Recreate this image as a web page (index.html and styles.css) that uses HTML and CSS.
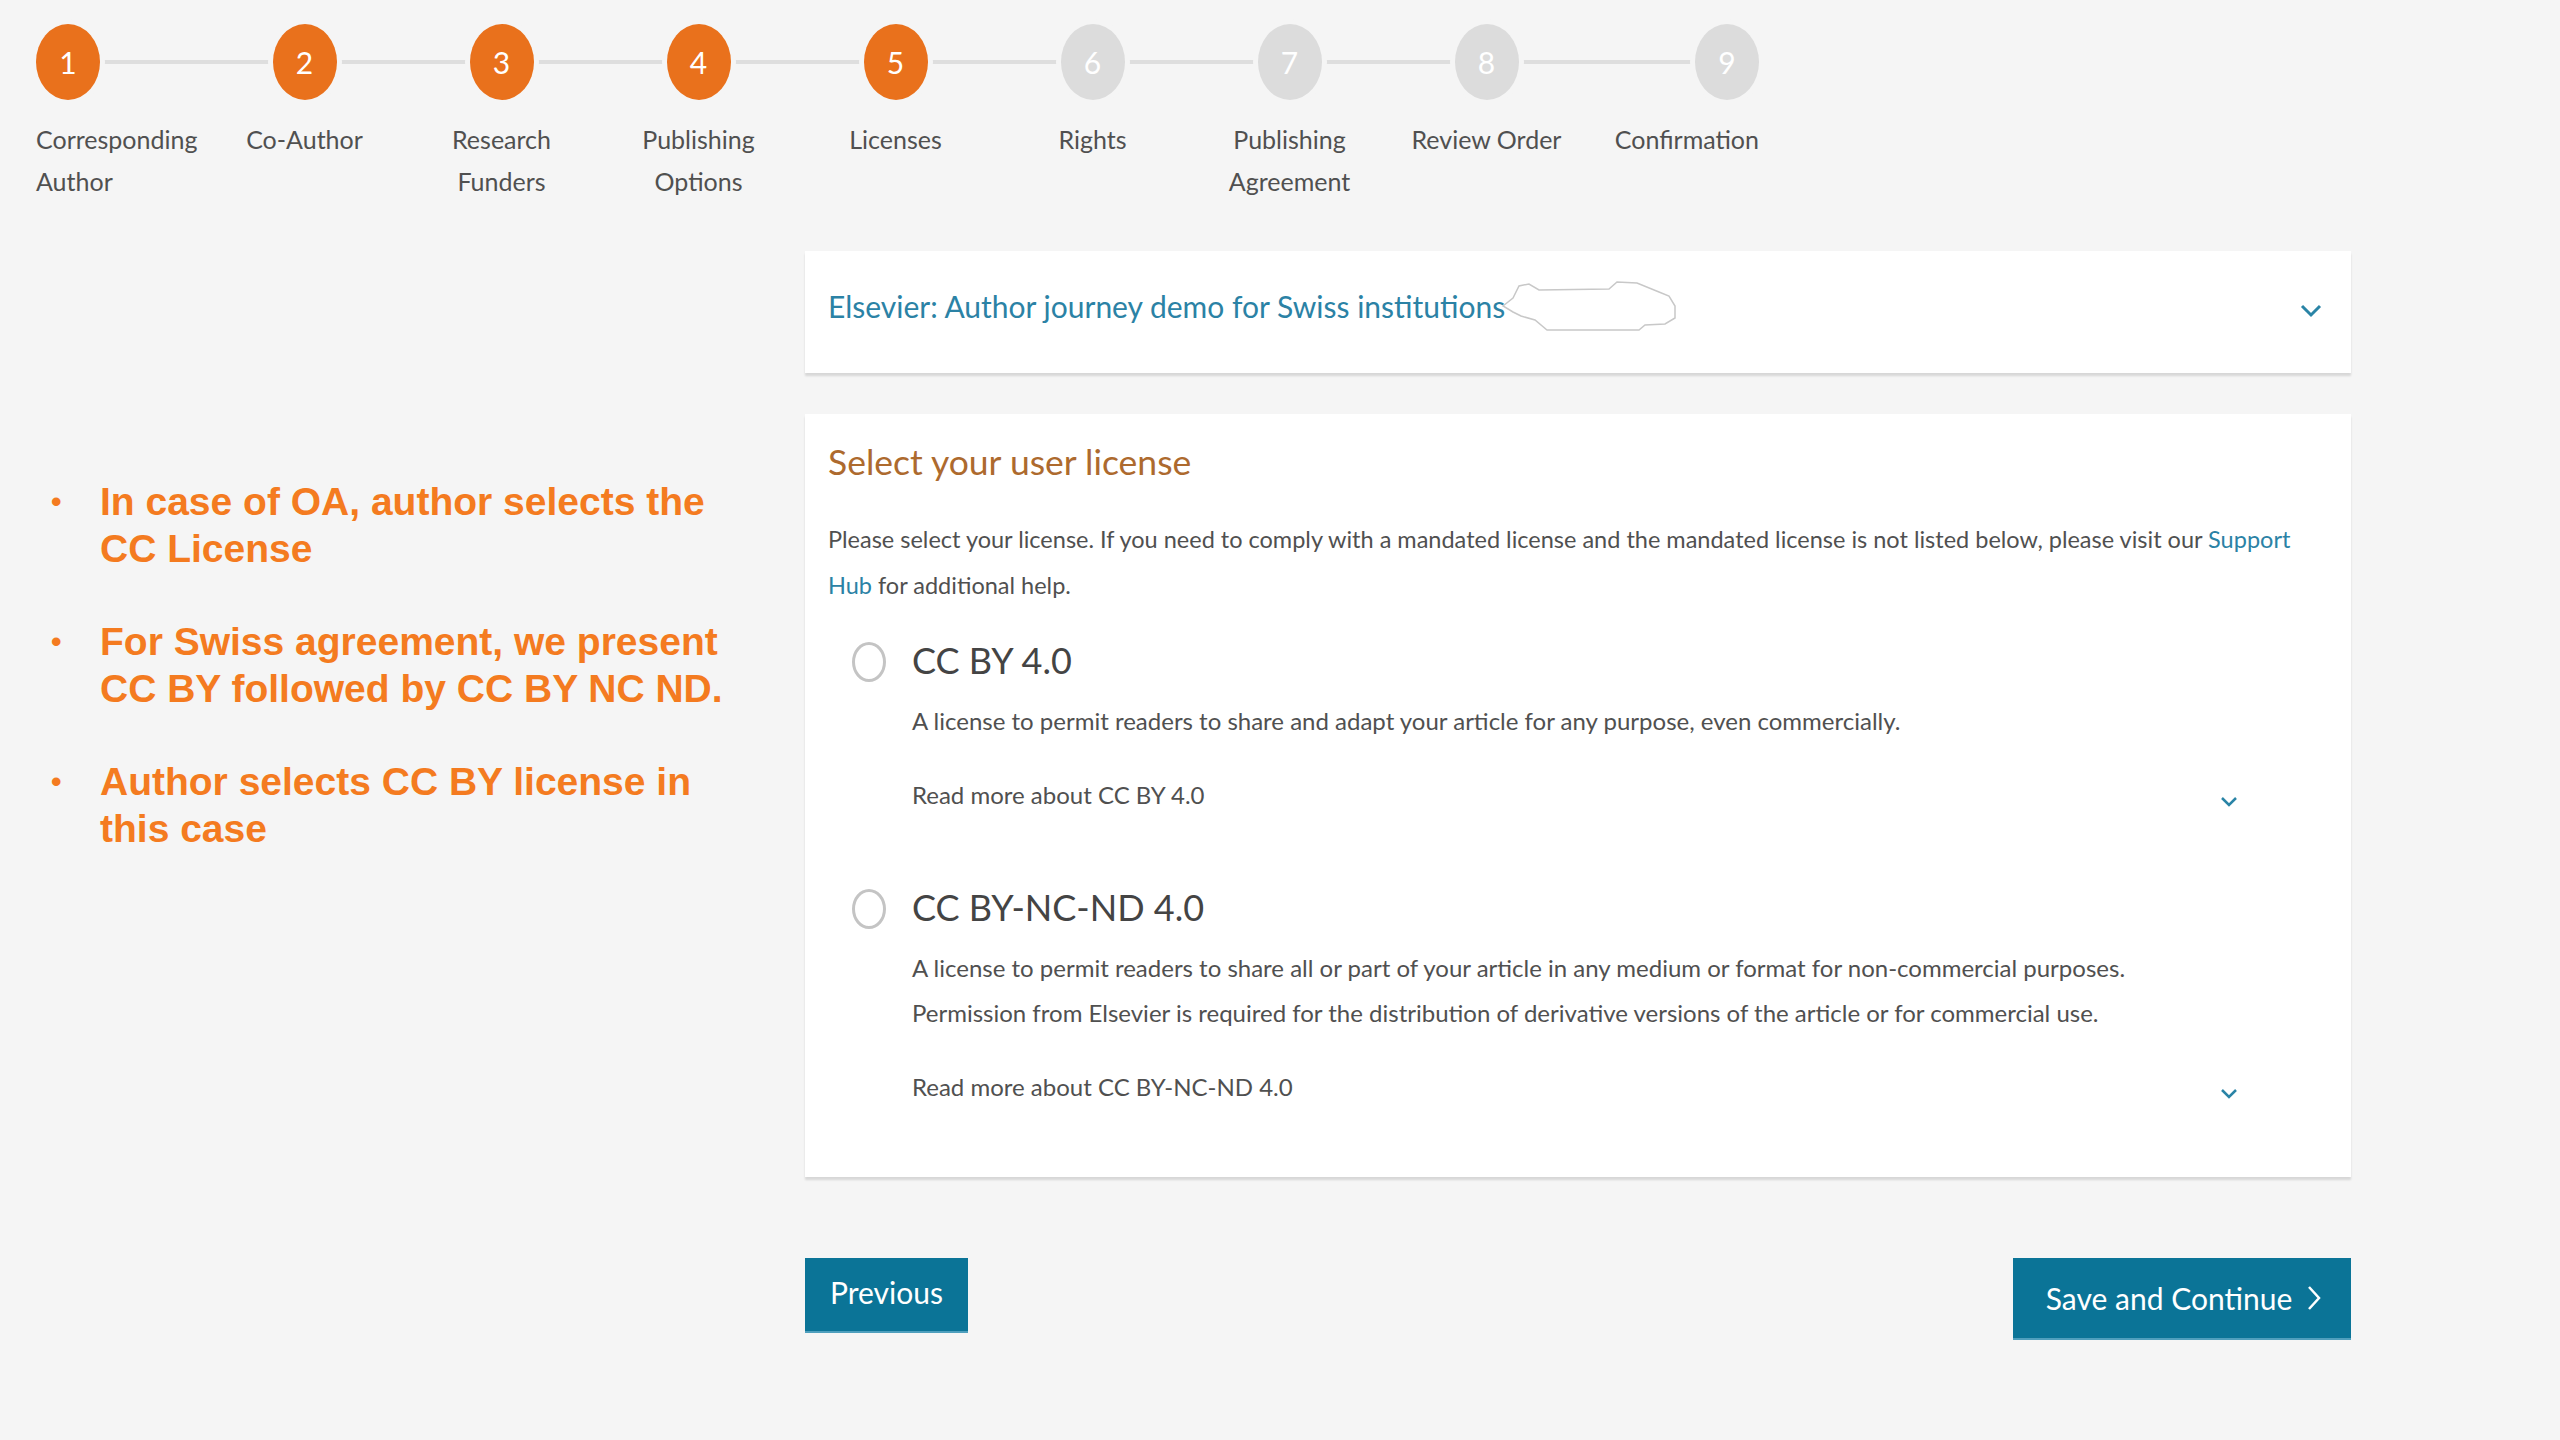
FILE: index.html
```html
<!DOCTYPE html>
<html lang="en">
<head>
    <meta charset="UTF-8">
    <meta name="viewport" content="width=device-width, initial-scale=1.0">
    <title>Licenses</title>
    <link rel="stylesheet" href="styles.css">
</head>
<body>
    <ol class="stepper">
        <li class="step done first"><span class="dot">1</span><span class="label">Corresponding<br>Author</span></li>
        <li class="step done"><span class="dot">2</span><span class="label">Co-Author</span></li>
        <li class="step done"><span class="dot">3</span><span class="label">Research<br>Funders</span></li>
        <li class="step done"><span class="dot">4</span><span class="label">Publishing<br>Options</span></li>
        <li class="step done"><span class="dot">5</span><span class="label">Licenses</span></li>
        <li class="step"><span class="dot">6</span><span class="label">Rights</span></li>
        <li class="step"><span class="dot">7</span><span class="label">Publishing<br>Agreement</span></li>
        <li class="step"><span class="dot">8</span><span class="label">Review Order</span></li>
        <li class="step last"><span class="dot">9</span><span class="label">Confirmation</span></li>
    </ol>

    <div class="layout">
        <ul class="notes">
            <li>In case of OA, author selects the CC License</li>
            <li>For Swiss agreement, we present CC BY followed by CC BY NC ND.</li>
            <li>Author selects CC BY license in this case</li>
        </ul>

        <div class="main">
            <div class="card journal">
                <span class="journal-title">Elsevier: Author journey demo for Swiss institutions</span>
                <svg class="blob" width="180" height="56" viewBox="0 0 180 56">
                    <path d="M4 28 L14 20 L20 8 L30 6 L40 12 L110 11 L118 4 L138 5 L160 14 L170 18 L176 28 L176 40 L166 46 L146 47 L140 52 L48 52 L36 42 L22 38 L14 34 Z" fill="#fff" stroke="#c8c8c8" stroke-width="1.5"/>
                </svg>
                <svg class="chev" width="24" height="16" viewBox="0 0 24 16"><path d="M3 3 L12 12 L21 3" fill="none" stroke="#2a84a6" stroke-width="3"/></svg>
            </div>

            <div class="card licenses">
                <h2>Select your user license</h2>
                <p class="intro">Please select your license. If you need to comply with a mandated license and the mandated license is not listed below, please visit our <a href="#">Support Hub</a> for additional help.</p>

                <div class="option">
                    <span class="radio"></span>
                    <div class="option-body">
                        <div class="option-name">CC BY 4.0</div>
                        <p class="option-desc">A license to permit readers to share and adapt your article for any purpose, even commercially.</p>
                        <div class="read-more">
                            <span>Read more about CC BY 4.0</span>
                            <svg class="chev small" width="20" height="14" viewBox="0 0 20 14"><path d="M3 3 L10 10 L17 3" fill="none" stroke="#2a84a6" stroke-width="2.5"/></svg>
                        </div>
                    </div>
                </div>

                <div class="option">
                    <span class="radio"></span>
                    <div class="option-body">
                        <div class="option-name">CC BY-NC-ND 4.0</div>
                        <p class="option-desc">A license to permit readers to share all or part of your article in any medium or format for non-commercial purposes.<br>Permission from Elsevier is required for the distribution of derivative versions of the article or for commercial use.</p>
                        <div class="read-more">
                            <span>Read more about CC BY-NC-ND 4.0</span>
                            <svg class="chev small" width="20" height="14" viewBox="0 0 20 14"><path d="M3 3 L10 10 L17 3" fill="none" stroke="#2a84a6" stroke-width="2.5"/></svg>
                        </div>
                    </div>
                </div>
            </div>

            <div class="actions">
                <button class="btn prev">Previous</button>
                <button class="btn next">Save and Continue
                    <svg class="arrow" width="16" height="28" viewBox="0 0 16 28"><path d="M3 3 L13 14 L3 25" fill="none" stroke="#fff" stroke-width="2.5"/></svg>
                </button>
            </div>
        </div>
    </div>
</body>
</html>
```

FILE: styles.css
```css
body {
    margin: 0;
    background-color: #f5f5f5;
    font-family: Lato, "Open Sans", sans-serif;
    color: #505050;
    width: 2560px;
    height: 1440px;
    overflow: hidden;
}

/* stepper */
.stepper {
    position: relative;
    display: flex;
    list-style: none;
    margin: 0;
    padding: 24px 0 0 36px;
}
.stepper::before {
    content: "";
    position: absolute;
    left: 69px;
    top: 60px;
    width: 1657px;
    height: 4px;
    background-color: #dedede;
}
.step {
    position: relative;
    width: 197px;
    display: flex;
    flex-direction: column;
    align-items: center;
    text-align: center;
}
.step.first {
    width: 170px;
    align-items: flex-start;
    text-align: left;
}
.step.last {
    width: 174px;
    align-items: flex-end;
    text-align: center;
}
.dot {
    width: 64px;
    height: 76px;
    border-radius: 50%;
    background-color: #dcdcdc;
    color: #fff;
    font-size: 30px;
    display: flex;
    align-items: center;
    justify-content: center;
    box-shadow: 0 0 0 5px #f5f5f5;
}
.step.done .dot {
    background-color: #e9711c;
}
.label {
    margin-top: 18px;
    font-size: 25px;
    line-height: 42px;
    color: #505050;
}

/* layout */
.layout {
    display: grid;
    grid-template-columns: 805px 1546px;
    margin-top: 49px;
}

.notes {
    list-style: none;
    margin: 227px 0 0;
    padding: 0 55px 0 51px;
    font-family: "Liberation Sans", Arial, sans-serif;
    font-weight: bold;
    font-size: 39px;
    line-height: 47px;
    color: #f47b20;
}
.notes li {
    display: grid;
    grid-template-columns: 49px 1fr;
    margin-bottom: 46px;
}
.notes li::before {
    content: "\2022";
    font-size: 30px;
}

.card {
    background-color: #fff;
    box-shadow: 0 3px 2px rgba(0, 0, 0, 0.12);
}
.journal {
    position: relative;
    height: 122px;
    display: flex;
    align-items: flex-start;
    padding: 30px 28px 0 23px;
    box-sizing: border-box;
}
.journal-title {
    font-size: 30px;
    color: #2b82a5;
    line-height: 50px;
}
.blob {
    margin-left: -6px;
    margin-top: -3px;
}
.journal .chev {
    margin-left: auto;
    margin-top: 22px;
}

.licenses {
    margin-top: 41px;
    padding: 20px 40px 44px 23px;
    min-height: 763px;
    box-sizing: border-box;
}
.licenses h2 {
    margin: 0;
    font-weight: normal;
    font-size: 35.5px;
    line-height: 56px;
    color: #ad6a2e;
}
.intro {
    margin: 26px 0 0;
    font-size: 23.5px;
    line-height: 46px;
}
.intro a {
    color: #2b82a5;
    text-decoration: none;
}

.option {
    display: flex;
    align-items: flex-start;
    margin-top: 24px;
}
.option + .option {
    margin-top: 64px;
}
.radio {
    width: 28px;
    height: 34px;
    border: 3px solid #c4c4c4;
    border-radius: 50%;
    margin: 10px 0 0 24px;
    flex-shrink: 0;
}
.option-body {
    flex: 1;
    margin-left: 26px;
}
.option-name {
    font-size: 36px;
    line-height: 56px;
    color: #444;
}
.option-desc {
    margin: 10px 0 0;
    font-size: 24px;
    line-height: 45px;
}
.read-more {
    display: flex;
    align-items: center;
    margin-top: 32px;
    font-size: 24px;
    line-height: 40px;
}
.read-more .chev {
    margin-left: auto;
    margin-right: 72px;
    margin-top: 14px;
}

/* buttons */
.actions {
    display: flex;
    justify-content: space-between;
    align-items: flex-start;
    margin-top: 81px;
}
.btn {
    font-family: Lato, "Open Sans", sans-serif;
    background-color: #0b7497;
    color: #fff;
    border: none;
    border-bottom: 2px solid #4f9fbd;
    font-size: 30px;
    cursor: pointer;
}
.prev {
    width: 163px;
    height: 75px;
    padding: 0 0 6px;
}
.next {
    width: 338px;
    height: 82px;
    padding: 0 0 0 4px;
    display: flex;
    align-items: center;
    justify-content: center;
}
.arrow {
    margin-left: 14px;
}
```
